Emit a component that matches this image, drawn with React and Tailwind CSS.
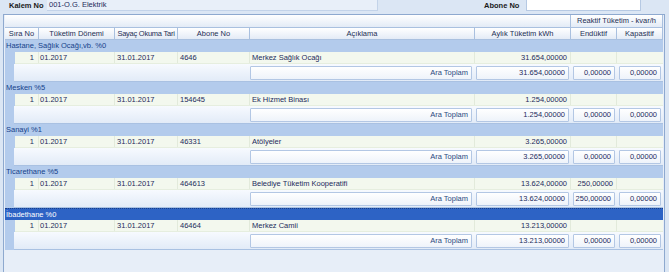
import React from 'react';

const groups = [
  {
    name: 'Hastane, Sağlık Ocağı,vb. %0',
    row: { sira: '1', donem: '01.2017', okuma: '31.01.2017', abone: '4646', aciklama: 'Merkez Sağlık Ocağı', aylik: '31.654,00000', enduktif: '', kapasitif: '' },
    total: { aylik: '31.654,00000', enduktif: '0,00000', kapasitif: '0,00000' },
  },
  {
    name: 'Mesken %5',
    row: { sira: '1', donem: '01.2017', okuma: '31.01.2017', abone: '154645', aciklama: 'Ek Hizmet Binası', aylik: '1.254,00000', enduktif: '', kapasitif: '' },
    total: { aylik: '1.254,00000', enduktif: '0,00000', kapasitif: '0,00000' },
  },
  {
    name: 'Sanayi %1',
    row: { sira: '1', donem: '01.2017', okuma: '31.01.2017', abone: '46331', aciklama: 'Atölyeler', aylik: '3.265,00000', enduktif: '', kapasitif: '' },
    total: { aylik: '3.265,00000', enduktif: '0,00000', kapasitif: '0,00000' },
  },
  {
    name: 'Ticarethane %5',
    row: { sira: '1', donem: '01.2017', okuma: '31.01.2017', abone: '464613', aciklama: 'Belediye Tüketim Kooperatifi', aylik: '13.624,00000', enduktif: '250,00000', kapasitif: '' },
    total: { aylik: '13.624,00000', enduktif: '250,00000', kapasitif: '0,00000' },
  },
  {
    name: 'İbadethane %0',
    selected: true,
    row: { sira: '1', donem: '01.2017', okuma: '31.01.2017', abone: '46464', aciklama: 'Merkez Camii', aylik: '13.213,00000', enduktif: '', kapasitif: '' },
    total: { aylik: '13.213,00000', enduktif: '0,00000', kapasitif: '0,00000' },
  },
];

const headCell = 'h-full flex items-center justify-center border-r border-b border-[#a9c0df] bg-linear-to-b from-white to-[#e3ebf6] text-[#1e2f55] whitespace-nowrap';
const dataCell = 'h-full flex items-center border-r border-[#e2eadb] whitespace-nowrap overflow-hidden';
const box = 'h-[14px] flex items-center justify-end pr-[3px] border border-[#b3c7e4] bg-linear-to-b from-white to-[#eef3fa] rounded-[1px]';

function Group({ group }) {
  const { row, total } = group;
  return (
    <div>
      <div
        className={
          group.selected
            ? 'h-[12px] flex items-center pl-[1px] bg-[#2d63c5] text-white border-t border-dotted border-[#1b3f86]'
            : 'h-[12px] flex items-center pl-[1px] bg-[#b3cbec] text-[#15428b]'
        }
      >
        {group.name}
      </div>
      <div className="flex h-[12px]">
        <div className="w-[10px] h-full bg-[#b3cbec]" />
        <div className="flex h-full bg-[#f3f8ee] text-[#1d2b5c] border-b border-[#e6eedf]">
          <div className={`${dataCell} w-[24px] justify-end pr-[4px]`}>{row.sira}</div>
          <div className={`${dataCell} w-[76px] pl-[1px]`}>{row.donem}</div>
          <div className={`${dataCell} w-[63px] pl-[2px]`}>{row.okuma}</div>
          <div className={`${dataCell} w-[72px] pl-[2px]`}>{row.abone}</div>
          <div className={`${dataCell} w-[225px] pl-[2px]`}>{row.aciklama}</div>
          <div className={`${dataCell} w-[96px] justify-end pr-[3px]`}>{row.aylik}</div>
          <div className={`${dataCell} w-[46px] justify-end pr-[3px]`}>{row.enduktif}</div>
          <div className={`${dataCell} w-[46px] justify-end pr-[3px] border-r-0`}>{row.kapasitif}</div>
        </div>
      </div>
      <div className="flex h-[18px]">
        <div className="w-[10px] h-full bg-[#b3cbec]" />
        <div className="flex flex-1 h-full pt-[2px] bg-linear-to-b from-[#f7faff] to-[#e2ebf7] border-b border-[#a9c1e2] text-[#1d2b5c]">
          <div className="w-[236px]" />
          <div className="w-[225px] pr-[3px]">
            <div className={`${box} text-[#2b4a80]`}>Ara Toplam</div>
          </div>
          <div className="w-[96px] pl-[1px] pr-[2px]">
            <div className={box}>{total.aylik}</div>
          </div>
          <div className="w-[46px] px-[2px]">
            <div className={box}>{total.enduktif}</div>
          </div>
          <div className="w-[46px] px-[2px]">
            <div className={box}>{total.kapasitif}</div>
          </div>
        </div>
      </div>
    </div>
  );
}

export default function App() {
  return (
    <div
      className="w-[669px] h-[272px] overflow-hidden bg-[#dbe6f4] text-[7.5px] leading-none flex flex-col"
      style={{ fontFamily: '"Liberation Sans", Arial, sans-serif' }}
    >
      <div className="h-[14px] flex items-start shrink-0">
        <div className="ml-[9px] w-[38px] h-[11px] flex items-center font-bold text-[#1a1a1a]">Kalem No</div>
        <div className="w-[331px] h-[11px] flex items-center pl-[2px] bg-[#e8eff9] border-r border-b border-[#c3d3e9] text-[#1d2b5c]">
          001-O.G. Elektrik
        </div>
        <div className="ml-[106px] w-[42px] h-[11px] flex items-center font-bold text-[#1a1a1a]">Abone No</div>
        <div className="w-[115px] h-[11px] bg-white border-l border-r border-b border-[#b6c9e3]" />
      </div>

      <div className="ml-[3px] w-[662px] flex-1 flex flex-col border-l border-r border-t border-[#8ea9cf] bg-[#e7eef8] pl-[1px]">
        <div className="flex h-[13px] shrink-0">
          <div className={`${headCell} w-[566px]`} />
          <div className={`${headCell} w-[92px]`}>Reaktif Tüketim - kvar/h</div>
        </div>
        <div className="flex h-[12px] shrink-0">
          <div className={`${headCell} w-[34px]`}>Sıra No</div>
          <div className={`${headCell} w-[76px]`}>Tüketim Dönemi</div>
          <div className={`${headCell} w-[63px] tracking-[-0.25px]`}>Sayaç Okuma Tari</div>
          <div className={`${headCell} w-[72px]`}>Abone No</div>
          <div className={`${headCell} w-[225px]`}>Açıklama</div>
          <div className={`${headCell} w-[96px]`}>Aylık Tüketim kWh</div>
          <div className={`${headCell} w-[46px]`}>Endüktif</div>
          <div className={`${headCell} w-[46px]`}>Kapasitif</div>
        </div>
        <div className="w-[658px]">
          {groups.map((g) => (
            <Group key={g.name} group={g} />
          ))}
        </div>
      </div>
    </div>
  );
}
